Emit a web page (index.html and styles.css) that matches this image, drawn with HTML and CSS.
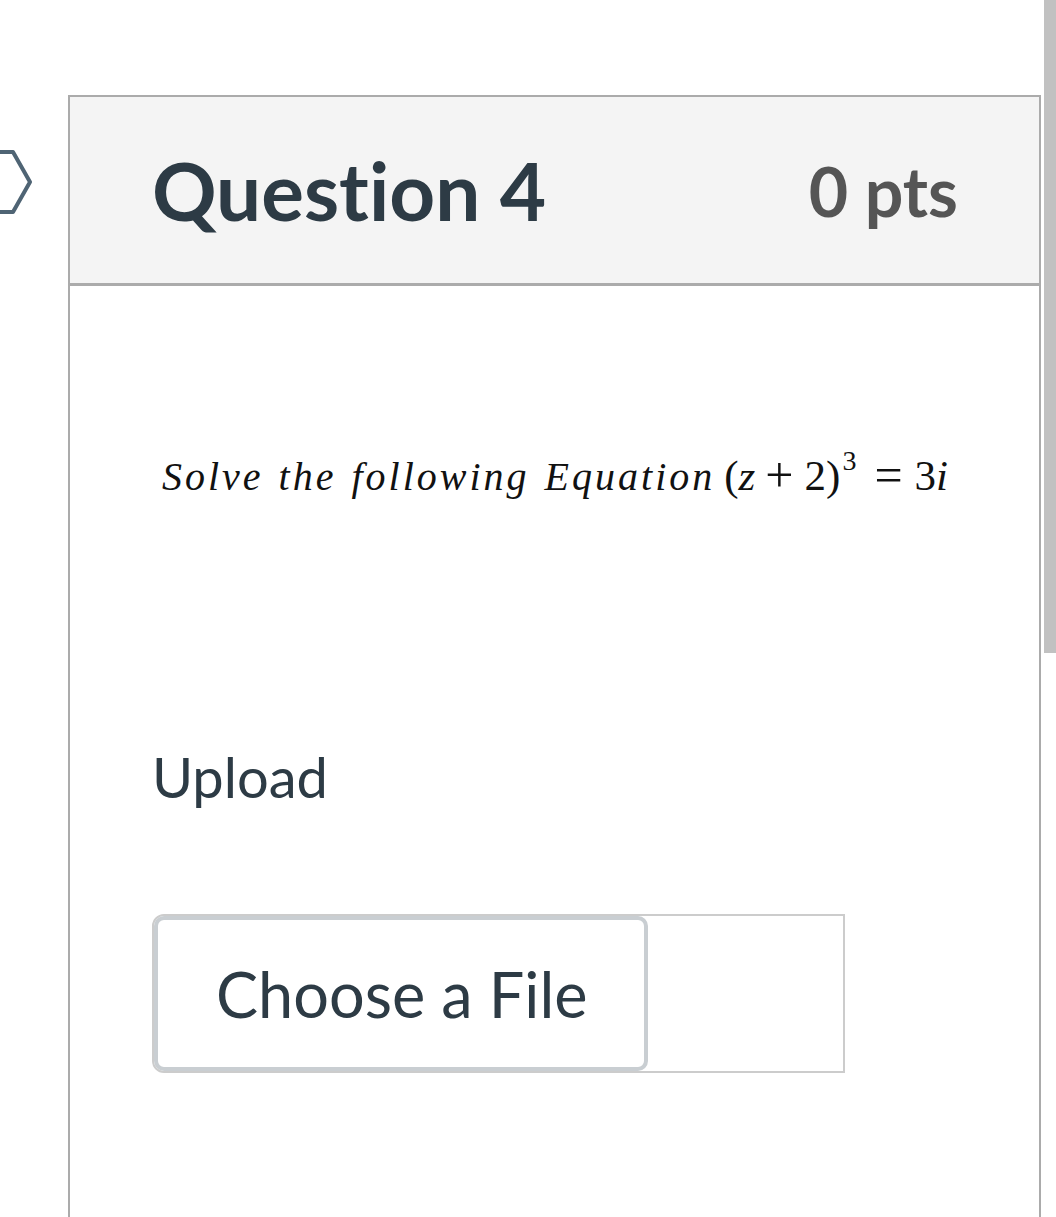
FILE: index.html
```html
<!DOCTYPE html>
<html>
<head>
<meta charset="utf-8">
<link rel="stylesheet" href="styles.css">
</head>
<body>
<div class="nav-flag">
  <svg width="34" height="66" viewBox="0 0 34 66"><path d="M-6 3 H13 L30 33 L13 63 H-6" fill="none" stroke="#4f6474" stroke-width="4" stroke-linejoin="round"/></svg>
</div>
<div class="scroll-thumb"></div>
<div class="page">
  <div class="question">
    <div class="q-header">
      <div class="q-title">Question 4</div>
      <div class="q-pts">0 pts</div>
    </div>
    <div class="q-body">
      <p class="equation"><span class="mtext">Solve the following Equation</span><span class="math"><span class="mrm mopen">(</span><span class="mi">z</span><span class="mop">+</span><span class="mrm">2)</span><sup class="msup">3</sup><span class="mop mrel">=</span><span class="mrm">3</span><span class="mi">i</span></span></p>
      <div class="upload-label">Upload</div>
      <div class="file-input">
        <div class="file-btn">Choose a File</div>
        <div class="file-name"></div>
      </div>
    </div>
  </div>
</div>
</body>
</html>
```
FILE: styles.css
```css
html, body {
  margin: 0;
  padding: 0;
  background: #ffffff;
  overflow: hidden;
}
body {
  font-family: Lato, "Noto Sans", sans-serif;
  color: #2d3b45;
  font-variant-ligatures: none;
}
.nav-flag {
  position: absolute;
  left: 0;
  top: 149px;
}
.scroll-thumb {
  position: fixed;
  right: 0;
  top: 0;
  width: 12px;
  height: 653px;
  background: #c1c1c1;
}
.page {
  padding-top: 95px;
  padding-left: 68px;
  width: 973px;
}
.question {
  border: 2.5px solid #ababab;
  border-bottom: none;
  height: 1200px;
}
.q-header {
  background: #f4f4f4;
  border-bottom: 3px solid #ababab;
  height: 186px;
  display: flex;
  align-items: center;
  justify-content: space-between;
  padding: 0 81px 0 82px;
}
.q-title {
  font-weight: 700;
  font-size: 80px;
  color: #2d3b45;
}
.q-pts {
  font-weight: 700;
  font-size: 68px;
  color: #555555;
}
.q-body {
  padding: 0 82px;
}
.equation {
  margin: 160px 0 0 10px;
  font-family: "Liberation Serif", "Times New Roman", serif;
  font-size: 40px;
  color: #111;
  line-height: 60px;
  white-space: nowrap;
  display: flex;
  align-items: baseline;
}
.mtext {
  font-style: italic;
  letter-spacing: 3px;
  word-spacing: 2px;
}
.math {
  font-size: 43px;
  display: flex;
  align-items: baseline;
}
.mopen {
  margin-left: 9px;
}
.mi {
  font-style: italic;
}
.mop {
  font-size: 50px;
  margin: 0 11px 0 10px;
  line-height: 40px;
  position: relative;
  top: 2px;
}
.mrel {
  margin: 0 12px 0 18px;
}
.msup {
  font-size: 28px;
  position: relative;
  top: -20px;
  margin-left: 2px;
}
.upload-label {
  margin-top: 232px;
  font-size: 56px;
  color: #2d3b45;
}
.file-input {
  margin-top: 104px;
  display: flex;
  width: 693px;
  height: 159px;
  box-sizing: border-box;
  border: 2px solid #cccccc;
  border-radius: 12px 0 0 12px;
}
.file-btn {
  width: 494px;
  box-sizing: border-box;
  border: 4px solid #c9ced2;
  border-radius: 10px;
  background: #fff;
  display: flex;
  align-items: center;
  padding-left: 58px;
  font-size: 63px;
  color: #2d3b45;
}
.file-name {
  flex: 1;
}
```
